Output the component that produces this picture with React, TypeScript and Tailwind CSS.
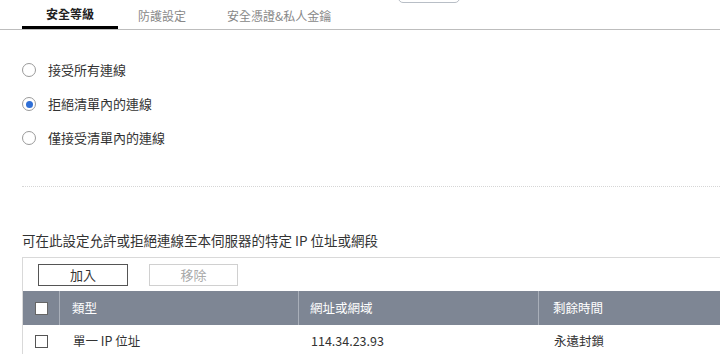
import React from "react";

const font = { fontFamily: '"Noto Sans CJK TC", "Noto Sans", sans-serif' };

function Radio({ checked, label }: { checked?: boolean; label: string }) {
  return (
    <div className="flex items-center h-[20px]">
      <div className="w-[14px] h-[14px] rounded-full border border-[#9a9a9a] bg-white flex items-center justify-center ml-[22px]">
        {checked && <div className="w-[7px] h-[7px] rounded-full bg-[#2f6fd6]" />}
      </div>
      <span className="ml-[12px] text-[13px] text-[#333]">{label}</span>
    </div>
  );
}

export default function App() {
  return (
    <div className="w-[720px] h-[354px] bg-white overflow-hidden relative" style={font}>
      <div className="absolute left-[398px] top-[-20px] w-[62px] h-[23px] rounded-[5px] border border-[#b8bec6] bg-white" />
      {/* tabs */}
      <div className="flex h-[30px] border-b border-[#bdbdbd] pl-[22px]">
        <div className="w-[96px] flex justify-center items-center border-b-[3px] border-black text-[12px] font-bold text-[#222] pt-[2px]">
          安全等級
        </div>
        <div className="ml-[20px] flex items-center text-[12px] text-[#888] pt-[2px]">防護設定</div>
        <div className="ml-[41px] flex items-center text-[12px] text-[#888] pt-[2px]">安全憑證&amp;私人金鑰</div>
      </div>
      {/* radios */}
      <div className="flex flex-col gap-[14px] mt-[30px]">
        <Radio label="接受所有連線" />
        <Radio checked label="拒絕清單內的連線" />
        <Radio label="僅接受清單內的連線" />
      </div>
      <div className="ml-[22px] mt-[38px] border-t border-dotted border-[#d6d6d6]" />
      <div className="ml-[22px] mt-[44px] text-[13.5px] text-[#333] leading-[18px]">
        可在此設定允許或拒絕連線至本伺服器的特定 IP 位址或網段
      </div>
      {/* table */}
      <div className="ml-[22px] mt-[8px] border-l border-t border-[#d9d9d9]">
        <div className="flex items-center h-[33px] pl-[15px] gap-[21px]">
          <div className="w-[90px] h-[22px] border border-[#555] flex items-center justify-center text-[13px] text-[#333]">
            加入
          </div>
          <div className="w-[89px] h-[22px] border border-[#d0d0d0] flex items-center justify-center text-[13px] text-[#aaa]">
            移除
          </div>
        </div>
        <div className="flex h-[34px] bg-[#7e8694] text-white text-[12.5px] items-center">
          <div className="w-[37px] flex justify-center items-center h-full border-r border-[#a9afb9]">
            <div className="w-[13px] h-[13px] bg-white border border-[#666]" />
          </div>
          <div className="w-[239px] pl-[12px] h-full flex items-center border-r border-[#a9afb9]">類型</div>
          <div className="w-[240px] pl-[11px] h-full flex items-center border-r border-[#a9afb9]">網址或網域</div>
          <div className="pl-[14px] flex-1">剩餘時間</div>
        </div>
        <div className="flex h-[32px] text-[12.5px] text-[#333] items-center">
          <div className="w-[37px] flex justify-center items-center">
            <div className="w-[13px] h-[13px] bg-white border border-[#555]" />
          </div>
          <div className="w-[239px] pl-[13px]">單一 IP 位址</div>
          <div className="w-[240px] pl-[12px]">114.34.23.93</div>
          <div className="pl-[15px] flex-1">永遠封鎖</div>
        </div>
      </div>
    </div>
  );
}
